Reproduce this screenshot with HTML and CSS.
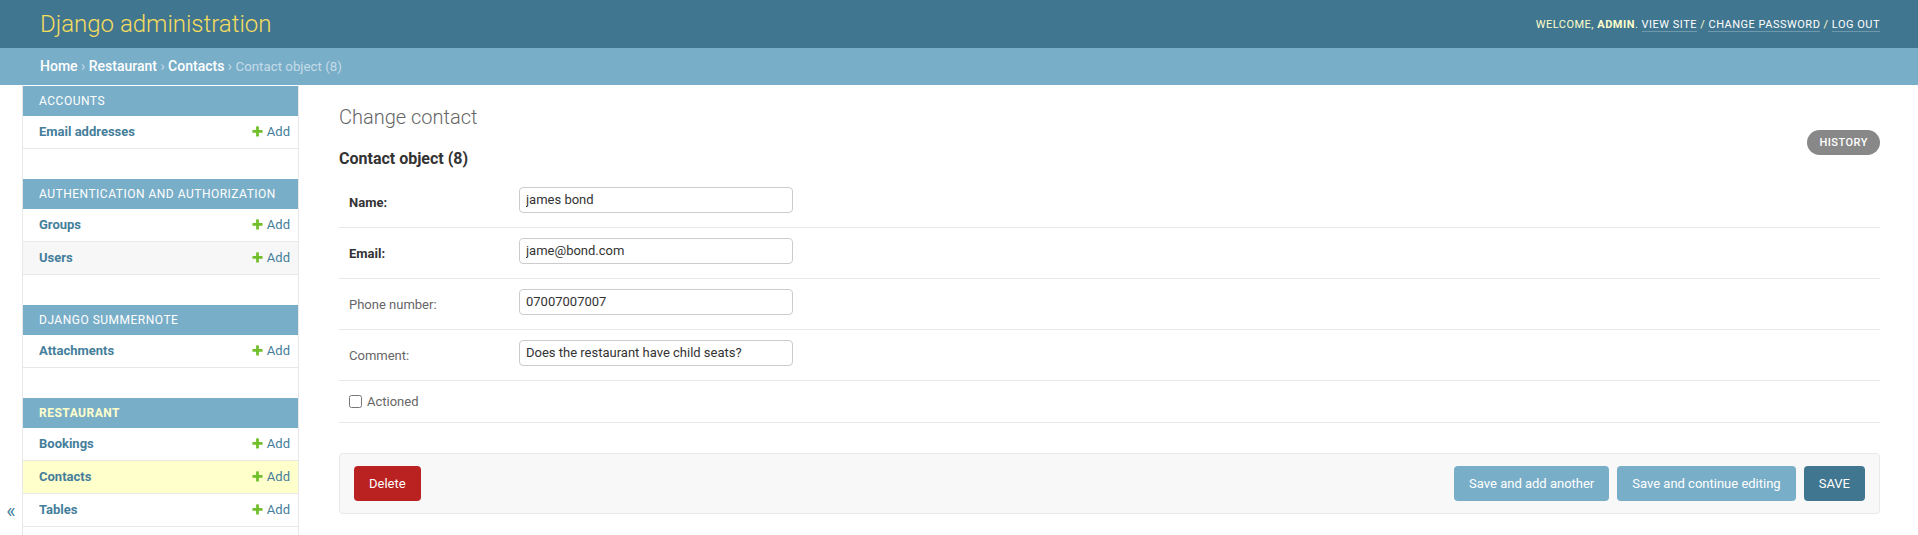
FILE: index.html
```html
<!DOCTYPE html>
<html lang="en">
<head>
<meta charset="utf-8">
<title>Change contact | Django site admin</title>
<link rel="stylesheet" href="styles.css">
</head>
<body>
<div class="container">
  <header class="header">
    <div class="branding"><h1 class="site-name"><a href="#">Django administration</a></h1></div>
    <div class="user-tools">Welcome, <strong>admin</strong>. <a href="#">View site</a> / <a href="#">Change password</a> / <a href="#">Log out</a></div>
  </header>
  <nav class="breadcrumbs"><a href="#">Home</a> &rsaquo; <a href="#">Restaurant</a> &rsaquo; <a href="#">Contacts</a> &rsaquo; <span class="crumb-current">Contact object (8)</span></nav>
  <div class="main">
    <button class="toggle-nav" type="button" aria-label="Toggle navigation">&laquo;</button>
    <nav class="sidebar">
      <table class="module">
        <caption><a class="section" href="#">Accounts</a></caption>
        <tr><th><a href="#">Email addresses</a></th><td><a class="addlink" href="#"><svg class="add-icon" width="13" height="13" viewBox="0 0 1792 1792"><path fill="#70bf2b" d="M1600 796v192q0 40-28 68t-68 28h-416v416q0 40-28 68t-68 28h-192q-40 0-68-28t-28-68v-416h-416q-40 0-68-28t-28-68v-192q0-40 28-68t68-28h416v-416q0-40 28-68t68-28h192q40 0 68 28t28 68v416h416q40 0 68 28t28 68z"/></svg>Add</a></td></tr>
      </table>
      <table class="module">
        <caption><a class="section" href="#">Authentication and Authorization</a></caption>
        <tr><th><a href="#">Groups</a></th><td><a class="addlink" href="#"><svg class="add-icon" width="13" height="13" viewBox="0 0 1792 1792"><path fill="#70bf2b" d="M1600 796v192q0 40-28 68t-68 28h-416v416q0 40-28 68t-68 28h-192q-40 0-68-28t-28-68v-416h-416q-40 0-68-28t-28-68v-192q0-40 28-68t68-28h416v-416q0-40 28-68t68-28h192q40 0 68 28t28 68v416h416q40 0 68 28t28 68z"/></svg>Add</a></td></tr>
        <tr class="row-hover"><th><a href="#">Users</a></th><td><a class="addlink" href="#"><svg class="add-icon" width="13" height="13" viewBox="0 0 1792 1792"><path fill="#70bf2b" d="M1600 796v192q0 40-28 68t-68 28h-416v416q0 40-28 68t-68 28h-192q-40 0-68-28t-28-68v-416h-416q-40 0-68-28t-28-68v-192q0-40 28-68t68-28h416v-416q0-40 28-68t68-28h192q40 0 68 28t28 68v416h416q40 0 68 28t28 68z"/></svg>Add</a></td></tr>
      </table>
      <table class="module">
        <caption><a class="section" href="#">Django Summernote</a></caption>
        <tr><th><a href="#">Attachments</a></th><td><a class="addlink" href="#"><svg class="add-icon" width="13" height="13" viewBox="0 0 1792 1792"><path fill="#70bf2b" d="M1600 796v192q0 40-28 68t-68 28h-416v416q0 40-28 68t-68 28h-192q-40 0-68-28t-28-68v-416h-416q-40 0-68-28t-28-68v-192q0-40 28-68t68-28h416v-416q0-40 28-68t68-28h192q40 0 68 28t28 68v416h416q40 0 68 28t28 68z"/></svg>Add</a></td></tr>
      </table>
      <table class="module current-app">
        <caption><a class="section" href="#">Restaurant</a></caption>
        <tr><th><a href="#">Bookings</a></th><td><a class="addlink" href="#"><svg class="add-icon" width="13" height="13" viewBox="0 0 1792 1792"><path fill="#70bf2b" d="M1600 796v192q0 40-28 68t-68 28h-416v416q0 40-28 68t-68 28h-192q-40 0-68-28t-28-68v-416h-416q-40 0-68-28t-28-68v-192q0-40 28-68t68-28h416v-416q0-40 28-68t68-28h192q40 0 68 28t28 68v416h416q40 0 68 28t28 68z"/></svg>Add</a></td></tr>
        <tr class="current-model"><th><a href="#">Contacts</a></th><td><a class="addlink" href="#"><svg class="add-icon" width="13" height="13" viewBox="0 0 1792 1792"><path fill="#70bf2b" d="M1600 796v192q0 40-28 68t-68 28h-416v416q0 40-28 68t-68 28h-192q-40 0-68-28t-28-68v-416h-416q-40 0-68-28t-28-68v-192q0-40 28-68t68-28h416v-416q0-40 28-68t68-28h192q40 0 68 28t28 68v416h416q40 0 68 28t28 68z"/></svg>Add</a></td></tr>
        <tr><th><a href="#">Tables</a></th><td><a class="addlink" href="#"><svg class="add-icon" width="13" height="13" viewBox="0 0 1792 1792"><path fill="#70bf2b" d="M1600 796v192q0 40-28 68t-68 28h-416v416q0 40-28 68t-68 28h-192q-40 0-68-28t-28-68v-416h-416q-40 0-68-28t-28-68v-192q0-40 28-68t68-28h416v-416q0-40 28-68t68-28h192q40 0 68 28t28 68v416h416q40 0 68 28t28 68z"/></svg>Add</a></td></tr>
      </table>
    </nav>
    <div class="content">
      <div class="content-head">
        <div class="titles">
          <h1 class="title">Change contact</h1>
          <h2 class="subtitle">Contact object (8)</h2>
        </div>
        <ul class="object-tools"><li><a class="history" href="#">History</a></li></ul>
      </div>
      <form class="change-form">
        <fieldset class="fieldset">
          <div class="form-row">
            <label class="required" for="id_name">Name:</label>
            <input class="vTextField" type="text" id="id_name" value="james bond">
          </div>
          <div class="form-row">
            <label class="required" for="id_email">Email:</label>
            <input class="vTextField" type="text" id="id_email" value="jame@bond.com">
          </div>
          <div class="form-row">
            <label for="id_phone">Phone number:</label>
            <input class="vTextField" type="text" id="id_phone" value="07007007007">
          </div>
          <div class="form-row">
            <label for="id_comment">Comment:</label>
            <input class="vTextField" type="text" id="id_comment" value="Does the restaurant have child seats?">
          </div>
          <div class="form-row checkbox-row">
            <input type="checkbox" id="id_actioned">
            <label class="vCheckboxLabel" for="id_actioned">Actioned</label>
          </div>
        </fieldset>
        <div class="submit-row">
          <a class="deletelink" href="#">Delete</a>
          <input class="button" type="submit" value="Save and add another">
          <input class="button" type="submit" value="Save and continue editing">
          <input class="button default" type="submit" value="Save">
        </div>
      </form>
    </div>
  </div>
</div>
</body>
</html>
```
FILE: styles.css
```css
html, body {
  margin: 0;
  padding: 0;
}

body {
  font-family: Roboto, "Liberation Sans", Arial, sans-serif;
  font-size: 14px;
  color: #333;
  background: #fff;
}

a {
  color: #447e9b;
  text-decoration: none;
}

/* Header */
.header {
  display: flex;
  justify-content: space-between;
  align-items: center;
  padding: 10px 38px 10px 40px;
  background: #417690;
  color: #ffc;
}

.site-name {
  margin: 0 20px 0 0;
  font-size: 24px;
  line-height: 28px;
  font-weight: 300;
}

.site-name a {
  color: #f5dd5d;
}

.user-tools {
  font-size: 11px;
  font-weight: 400;
  letter-spacing: 0.5px;
  text-transform: uppercase;
  text-align: right;
}

.user-tools strong {
  font-weight: 700;
}

.user-tools a {
  color: #fff;
  border-bottom: 1px solid rgba(255, 255, 255, 0.25);
}

/* Breadcrumbs */
.breadcrumbs {
  display: block;
  padding: 10px 40px;
  background: #79aec8;
  color: #c4dce8;
  line-height: 17px;
}

.breadcrumbs a {
  color: #fff;
  font-weight: 500;
}

.crumb-current {
  font-size: 13.3px;
}

/* Main */
.main {
  display: flex;
  min-height: 852px;
}

.toggle-nav {
  flex: 0 0 23px;
  width: 23px;
  padding: 0;
  border: 0;
  border-right: 1px solid #e8e8e8;
  background: #fff;
  color: #447e9b;
  font-family: inherit;
  font-size: 20px;
  display: flex;
  align-items: center;
  justify-content: center;
}

.sidebar {
  flex: 0 0 275px;
  width: 275px;
  border-top: 1px solid transparent;
  border-right: 1px solid #e8e8e8;
}

.module {
  width: 100%;
  border-collapse: collapse;
  margin-bottom: 30px;
}

.module caption {
  padding: 8px 8px 8px 16px;
  background: #79aec8;
  text-align: left;
  font-size: 12px;
  line-height: 14px;
  letter-spacing: 0.5px;
  text-transform: uppercase;
  font-weight: 400;
}

.module caption a {
  color: #fff;
}

.module.current-app caption a {
  color: #ffc;
  font-weight: 700;
}

.module th,
.module td {
  height: 16px;
  font-size: 13px;
  line-height: 16px;
  padding: 8px;
  border-bottom: 1px solid #e8e8e8;
  vertical-align: top;
}

.module th {
  width: 100%;
  padding-left: 16px;
  text-align: left;
  font-weight: 700;
}

.module td {
  white-space: nowrap;
}

.add-icon {
  vertical-align: top;
  margin: 1px 3px 0 0;
}

.row-hover {
  background: #f7f7f7;
}

.current-model {
  background: #ffc;
}

/* Content */
.content {
  flex: 1 1 auto;
  min-width: 0;
  padding: 20px 38px 20px 40px;
}

.content-head {
  display: flex;
  justify-content: space-between;
  align-items: flex-start;
}

.title {
  margin: 0 0 20px;
  font-size: 20px;
  line-height: 24px;
  font-weight: 300;
  color: #666;
}

.subtitle {
  margin: 0 0 8px;
  font-size: 16px;
  line-height: 19px;
  font-weight: 700;
  color: #333;
}

.object-tools {
  list-style: none;
  margin: 25px 0 0;
  padding: 0;
}

.history {
  display: block;
  padding: 5px 12px;
  line-height: 15px;
  background: #888;
  color: #fff;
  border-radius: 15px;
  font-size: 11px;
  font-weight: 500;
  text-transform: uppercase;
  letter-spacing: 0.5px;
}

.change-form {
  margin: 0;
}

.fieldset {
  margin: 0 0 30px;
  padding: 0;
  min-width: 0;
  border: 0;
}

.form-row {
  display: flex;
  align-items: flex-start;
  padding: 10px 10px 14px;
  border-bottom: 1px solid #e8e8e8;
  font-size: 13px;
}

.form-row:first-child {
  padding-top: 11px;
}

.form-row label {
  flex: 0 0 160px;
  padding: 9px 10px 0 0;
  line-height: 1;
  color: #666;
}

.form-row label.required {
  font-weight: 700;
  color: #333;
}

.vTextField {
  width: 260px;
  height: 14px;
  margin: 0;
  padding: 5px 6px;
  border: 1px solid #ccc;
  border-radius: 4px;
  font-family: inherit;
  font-size: 13px;
  line-height: 14px;
  color: #333;
  background: #fff;
}

.checkbox-row {
  align-items: center;
  height: 21px;
  padding-bottom: 10px;
}

.checkbox-row input {
  width: 13px;
  height: 13px;
  margin: 0;
}

.form-row .vCheckboxLabel {
  flex: 0 0 auto;
  padding: 0 0 0 5px;
  color: #666;
}

/* Submit row */
.submit-row {
  display: flex;
  align-items: center;
  gap: 8px;
  margin: 0 0 20px;
  padding: 12px 14px;
  background: #f8f8f8;
  border: 1px solid #e8e8e8;
  border-radius: 4px;
}

.deletelink {
  margin-right: auto;
  padding: 10px 15px;
  line-height: 15px;
  font-size: 13px;
  background: #ba2121;
  color: #fff;
  border-radius: 4px;
}

.button {
  box-sizing: border-box;
  height: 35px;
  margin: 0;
  padding: 10px 15px;
  border: 0;
  border-radius: 4px;
  font-family: inherit;
  font-size: 13px;
  line-height: 15px;
  background: #79aec8;
  color: #fff;
  cursor: pointer;
}

.button.default {
  background: #417690;
  text-transform: uppercase;
}
```
